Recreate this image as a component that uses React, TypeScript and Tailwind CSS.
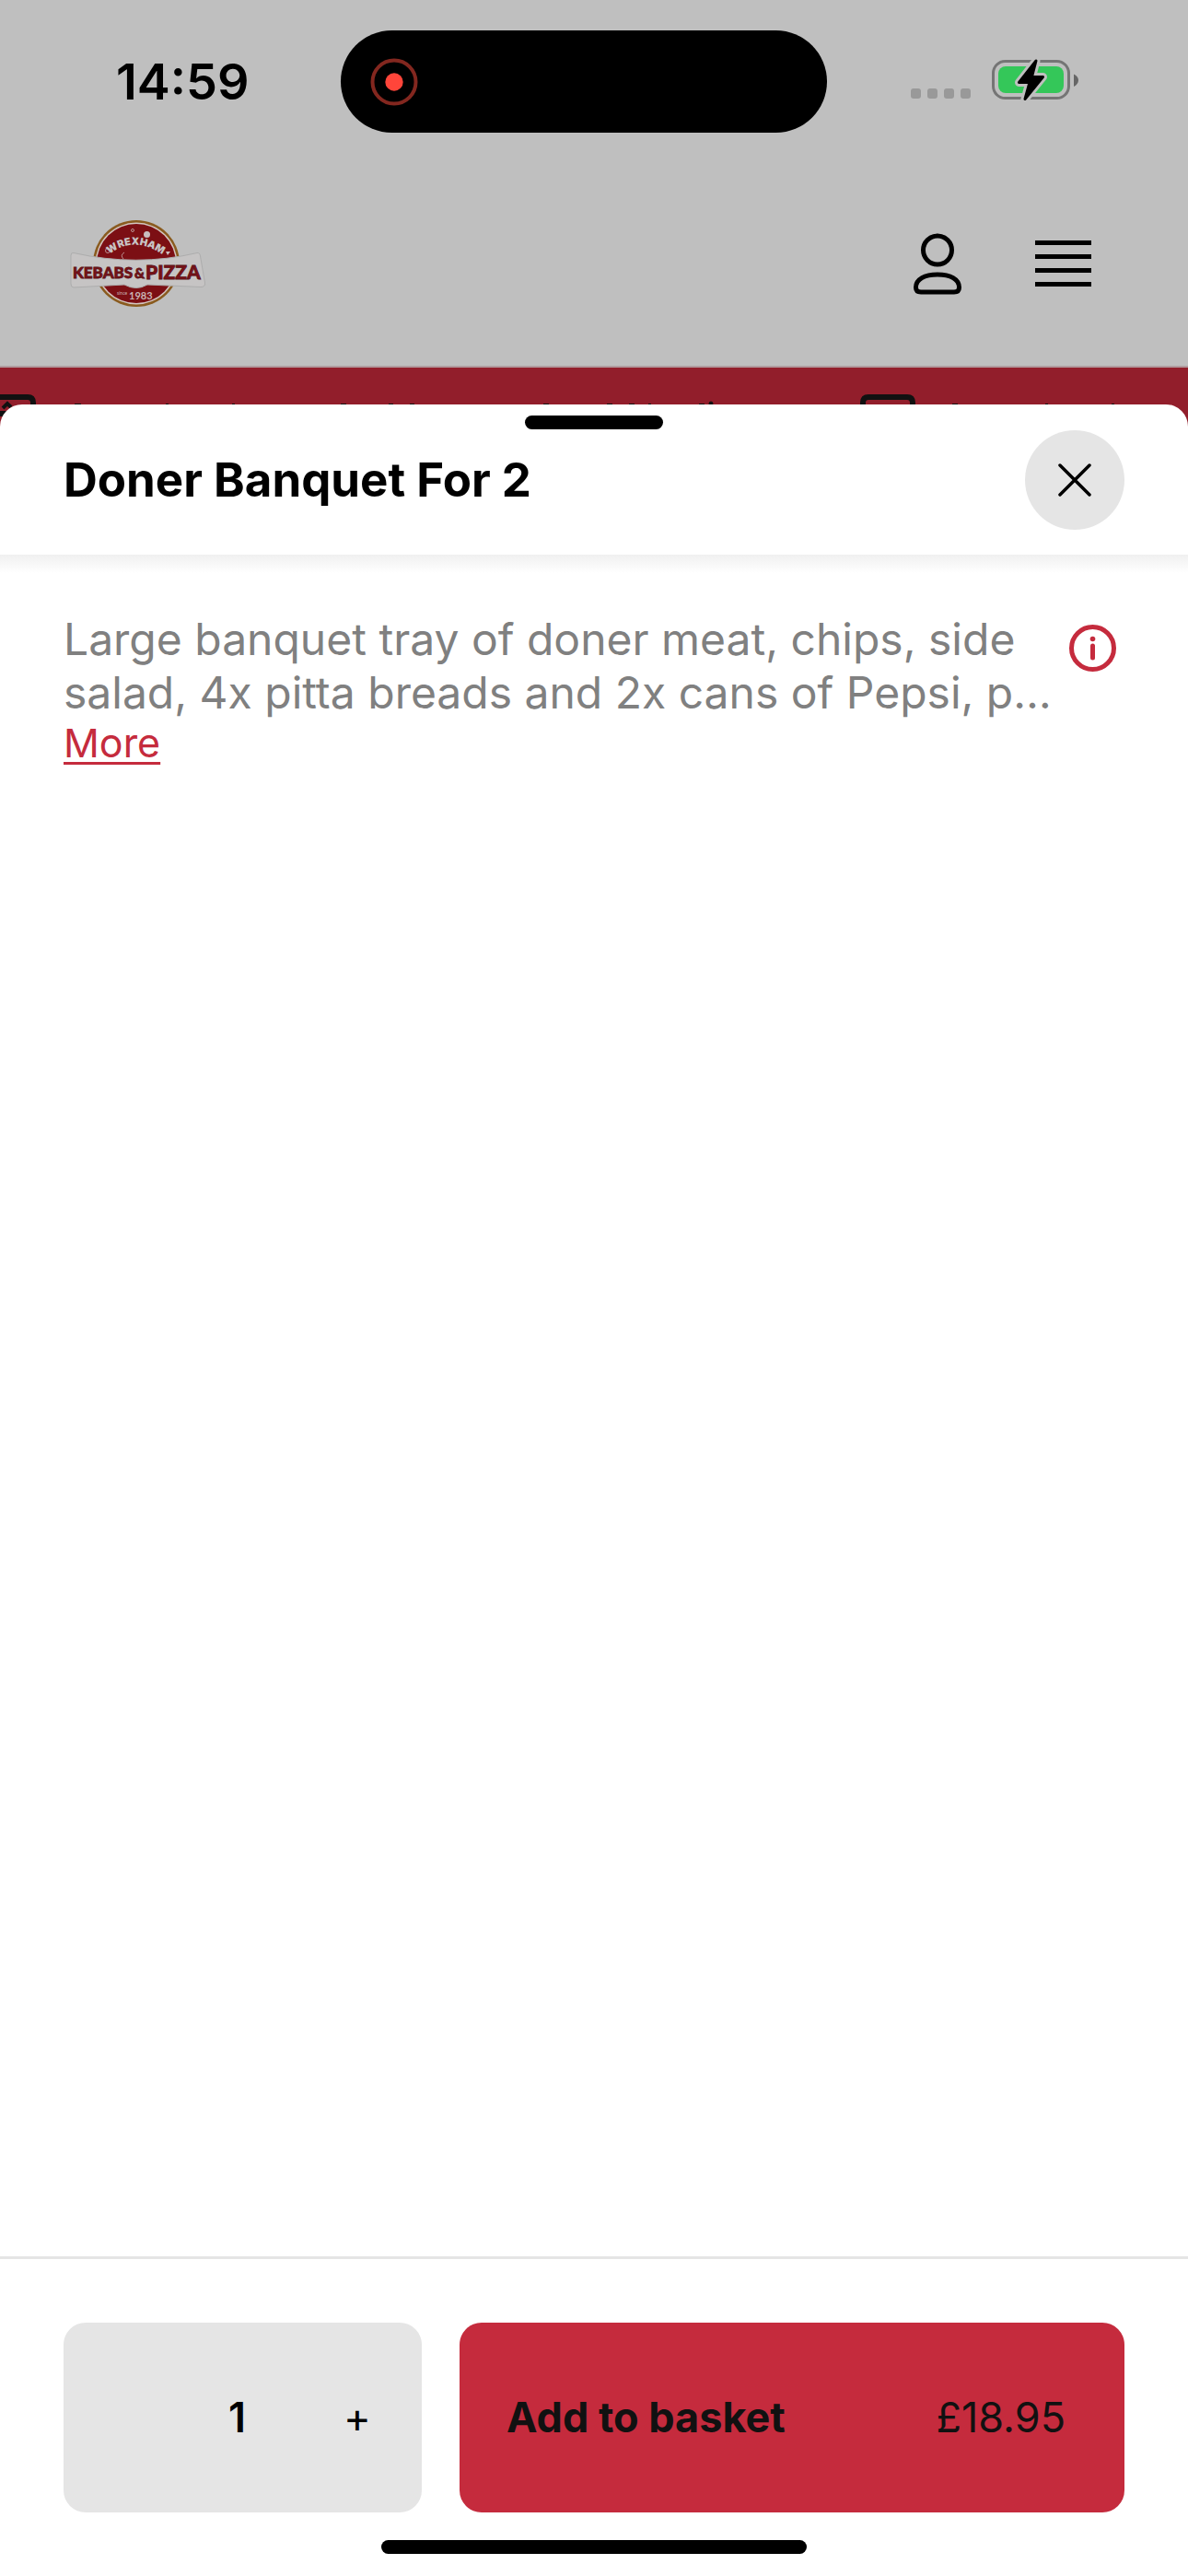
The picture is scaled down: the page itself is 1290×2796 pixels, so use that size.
import { useState } from 'react';

function StatusBar() {
  return (
    <div className="flex items-center pt-[33px] pr-[118px] pl-[126px]">
      <time className="w-[244px] shrink-0 text-[54px] leading-[111px] font-semibold">14:59</time>
      <div className="flex h-[111px] w-[528px] items-center rounded-full bg-black pl-8">
        <svg className="size-[52px]" viewBox="0 0 52 52" fill="none">
          <circle cx="26" cy="26" r="23.5" stroke="#83271f" strokeWidth="4" />
          <circle cx="26" cy="26" r="9.7" fill="#ff453a" />
        </svg>
      </div>
      <div className="ml-auto flex items-center gap-[22px] pb-1">
        <svg className="h-[44px] w-[66px]" viewBox="0 0 66 44" fill="#999">
          <rect x="0" y="31" width="11" height="11" rx="3" />
          <rect x="18" y="31" width="11" height="11" rx="3" />
          <rect x="36" y="31" width="11" height="11" rx="3" />
          <rect x="54" y="31" width="11" height="11" rx="3" />
        </svg>
        <svg className="h-[46px] w-[95px]" viewBox="0 0 95 46" fill="none">
          <rect x="1.5" y="2.5" width="82" height="40" rx="13" stroke="#757575" strokeWidth="3" />
          <rect x="7" y="8" width="71" height="29" rx="8" fill="#34c759" />
          <path d="M89 16.5C92 18 94 20 94 23C94 26 92 28.5 89 30Z" fill="#666" />
          <path
            d="M48 2L29.5 25.5H41L36 43.5L55.5 19.5H43.5Z"
            fill="#bfbfbf"
            stroke="#bfbfbf"
            strokeWidth="9"
            strokeLinejoin="round"
          />
          <path
            d="M48 2L29.5 25.5H41L36 43.5L55.5 19.5H43.5Z"
            fill="#000"
            stroke="#000"
            strokeWidth="3"
            strokeLinejoin="round"
          />
        </svg>
      </div>
    </div>
  );
}

function Logo() {
  return (
    <svg className="h-[98px] w-[150px]" viewBox="75 237 150 98" role="img" aria-label="Wrexham Kebabs & Pizza">
      <defs>
        <path id="arc" d="M119 276Q147 253 183 281" />
      </defs>
      <circle cx="148" cy="286" r="47" fill="#8a5b1f" />
      <circle cx="148" cy="286" r="44.5" fill="#d3c5c0" />
      <circle cx="148" cy="286" r="43" fill="#7c0f14" />
      <circle cx="159.5" cy="254.5" r="3.5" fill="#c9bfbf" />
      <circle cx="144" cy="250" r="1.5" fill="none" stroke="#b98f90" />
      <circle cx="117" cy="272" r="2.5" fill="none" stroke="#b98f90" />
      <path d="M135 274Q130 277 134 281" fill="none" stroke="#b98f90" />
      <path d="M180 273L185 273L182 277Z" fill="#c9bfbf" />
      <text className="font-['Inter',sans-serif] text-[11px] font-black" fill="#c8c4c4">
        <textPath href="#arc">WREXHAM</textPath>
      </text>
      <path
        d="M77 277Q77 274 80 274.5Q148 290 214 274.5Q217 274 217.5 278L222.5 307Q223 311.5 218 311.5L160 309Q148 316 135 309L80 312Q77 312 77 308Z"
        fill="#c6c4c4"
        stroke="#adadad"
      />
      <g className="font-['Lato',sans-serif] font-black" fill="#7c1017" stroke="#5a1418" strokeWidth="0.8">
        <text x="79" y="302" className="text-[17px]">
          KEBABS
        </text>
        <text x="146" y="302" className="text-[15px]">
          &amp;
        </text>
        <text x="158" y="303" className="text-[21px]">
          PIZZA
        </text>
      </g>
      <g className="font-['Lato',sans-serif]" fill="#c8b4b4">
        <text x="127" y="320" className="text-[5px]">
          since
        </text>
        <text x="140" y="325" className="text-[11px] font-bold">
          1983
        </text>
      </g>
    </svg>
  );
}

function Header() {
  return (
    <header className="flex h-[255px] items-center justify-between border-b-2 border-[#b09a9d] pt-[30px] pr-[105px] pl-[75px]">
      <Logo />
      <div className="flex items-center gap-20">
        <button aria-label="Account">
          <svg className="h-[68px] w-[52px]" viewBox="0 0 52 68" fill="none" stroke="#000" strokeWidth="5">
            <circle cx="26" cy="19.5" r="15.5" />
            <path d="M26 46C12 46 2.5 51 2.5 60Q2.5 65 8 65H44Q49.5 65 49.5 60C49.5 51 40 46 26 46Z" />
          </svg>
        </button>
        <button aria-label="Menu">
          <svg className="h-[52px] w-[61px]" viewBox="0 0 61 52">
            <path d="M0 3.5H61M0 18.5H61M0 33.5H61M0 48.5H61" stroke="#000" strokeWidth="5" />
          </svg>
        </button>
      </div>
    </header>
  );
}

// Promo strip, mostly covered by the sheet
function PromoStrip() {
  return (
    <div className="h-16 overflow-hidden bg-[#921e2b]">
      <svg className="h-16 w-[1290px] max-w-none" viewBox="0 0 1290 64" fill="none" stroke="#111">
        <g strokeWidth="6">
          <path d="M-20 32H30Q36 32 36 38V64M-20 50H14" />
          <path d="M937 64V38Q937 32 943 32H985Q991 32 991 38V64" />
        </g>
        <path d="M3 44L8 39L12 43" strokeWidth="4" />
        <g strokeWidth="1">
          <path d="M81 39.5H88M180 39.5H183M252 39.5H255M370 39.5H376M422 39.5H427M445 39.5H450M590 39.5H596" />
          <path d="M659 39.5H665M683 39.5H689M704 39.5H707M759 39.5H765M1034 39.5H1040M1135 39.5H1138M1207 39.5H1210" />
        </g>
        <circle cx="772" cy="39" r="2" fill="#111" />
      </svg>
    </div>
  );
}

export default function App() {
  const [quantity, setQuantity] = useState(1);

  return (
    <div className="flex min-h-screen flex-col bg-[#bfbfbf] font-['Inter',sans-serif] text-black">
      <StatusBar />
      <Header />
      <PromoStrip />

      <main className="relative -mt-6 flex grow flex-col rounded-t-3xl bg-white">
        {/* Drag handle */}
        <div className="absolute top-3 left-1/2 h-[15px] w-[150px] -translate-x-1/2 rounded-full bg-black" />

        {/* Sheet header */}
        <div className="flex h-[163px] items-center justify-between px-[69px]">
          <h1 className="text-[51px] leading-[58px] font-bold">Doner Banquet For 2</h1>
          <button
            aria-label="Close"
            className="flex size-[108px] items-center justify-center rounded-full bg-[#e5e5e5]"
          >
            <svg className="size-[36px]" viewBox="0 0 36 36" stroke="#000" strokeWidth="3.5" strokeLinecap="round">
              <path d="M2 2L34 34M34 2L2 34" />
            </svg>
          </button>
        </div>
        <div className="h-5 bg-linear-to-b from-[#f0f0f0] to-white" />

        {/* Description */}
        <section className="flex grow items-start pt-[43px] pr-[78px] pl-[69px]">
          <div className="flex-1">
            <p className="text-[48px] leading-[58px] text-[#808080]">
              Large banquet tray of doner meat, chips, side salad, 4x pitta breads and 2x cans of Pepsi, p…
            </p>
            <button className="block text-[43px] leading-[50px] text-[#c52b3d] underline decoration-3 underline-offset-[5px]">
              More
            </button>
          </div>
          <button aria-label="Product information" className="mt-[13px]">
            <svg className="size-[51px]" viewBox="0 0 51 51" fill="none" stroke="#c52b3d">
              <circle cx="25.5" cy="25.5" r="23" strokeWidth="5" />
              <path d="M25.5 23V36" strokeWidth="5" strokeLinecap="round" />
              <circle cx="25.5" cy="15.5" r="2.8" fill="#c52b3d" stroke="none" />
            </svg>
          </button>
        </section>

        {/* Basket bar */}
        <footer className="flex gap-[41px] border-t-3 border-[#e5e5e5] p-[69px]">
          <div className="grid h-[206px] w-[389px] shrink-0 grid-cols-3 items-center rounded-3xl bg-[#e5e5e5] px-2 text-center text-[45px]">
            <output className="col-start-2 pr-3 font-semibold">{quantity}</output>
            <button aria-label="Increase quantity" onClick={() => setQuantity(quantity + 1)}>
              +
            </button>
          </div>
          <button className="flex h-[206px] grow items-center justify-between rounded-3xl bg-[#c52b3d] pr-16 pl-[51px] text-[45px] text-[#111]">
            <span className="font-bold">Add to basket</span>
            <span>£18.95</span>
          </button>
        </footer>

        {/* Home indicator */}
        <div className="absolute bottom-6 left-1/2 h-[15px] w-[462px] -translate-x-1/2 rounded-full bg-black" />
      </main>
    </div>
  );
}
